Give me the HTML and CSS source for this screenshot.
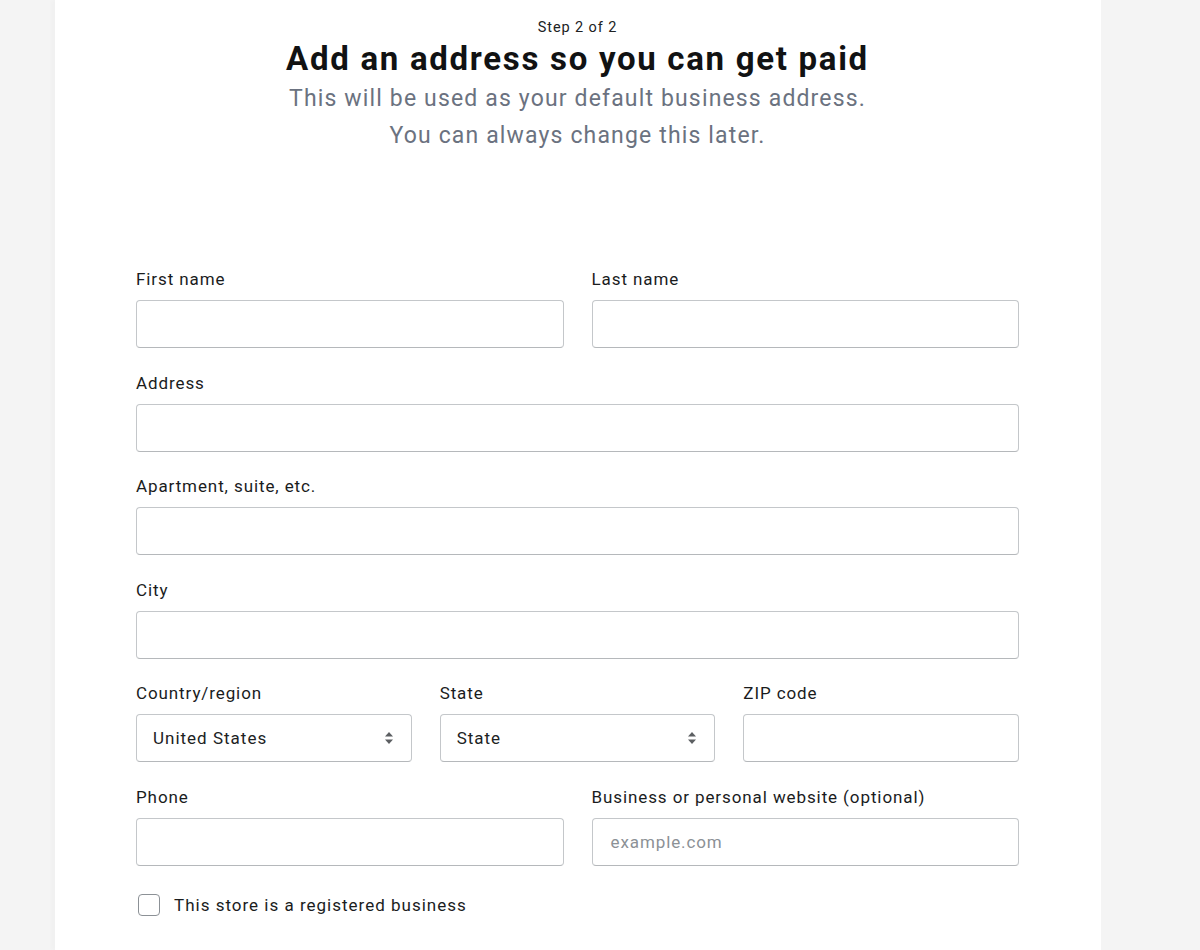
FILE: index.html
```html
<!DOCTYPE html>
<html lang="en">
<head>
<meta charset="utf-8">
<title>Add an address</title>
<link rel="stylesheet" href="styles.css">
</head>
<body>
<div class="page">
  <main class="panel">
    <header class="head">
      <div class="step">Step 2 of 2</div>
      <h1 class="title">Add an address so you can get paid</h1>
      <p class="sub">This will be used as your default business address.<br>You can always change this later.</p>
    </header>
    <form class="form">
      <div class="row two">
        <div class="field"><label class="label">First name</label><div class="input"></div></div>
        <div class="field"><label class="label">Last name</label><div class="input"></div></div>
      </div>
      <div class="row">
        <div class="field"><label class="label">Address</label><div class="input"></div></div>
      </div>
      <div class="row">
        <div class="field"><label class="label">Apartment, suite, etc.</label><div class="input"></div></div>
      </div>
      <div class="row">
        <div class="field"><label class="label">City</label><div class="input"></div></div>
      </div>
      <div class="row three">
        <div class="field"><label class="label">Country/region</label>
          <div class="input select"><span>United States</span>
            <svg class="arr" width="10" height="14" viewBox="0 0 10 14"><path d="M5 1 L9 5.5 H1 Z" fill="#5c5f62"/><path d="M5 13 L9 8.5 H1 Z" fill="#5c5f62"/></svg>
          </div>
        </div>
        <div class="field"><label class="label">State</label>
          <div class="input select"><span>State</span>
            <svg class="arr" width="10" height="14" viewBox="0 0 10 14"><path d="M5 1 L9 5.5 H1 Z" fill="#5c5f62"/><path d="M5 13 L9 8.5 H1 Z" fill="#5c5f62"/></svg>
          </div>
        </div>
        <div class="field"><label class="label">ZIP code</label><div class="input"></div></div>
      </div>
      <div class="row two">
        <div class="field"><label class="label">Phone</label><div class="input"></div></div>
        <div class="field"><label class="label">Business or personal website (optional)</label><div class="input"><span class="ph">example.com</span></div></div>
      </div>
      <div class="check">
        <span class="box"></span>
        <span class="check-text">This store is a registered business</span>
      </div>
    </form>
  </main>
</div>
</body>
</html>
```
FILE: styles.css
```css
html, body {
  margin: 0;
  padding: 0;
  background: #f4f4f4;
  font-family: Roboto, "Liberation Sans", Arial, sans-serif;
  color: #202223;
}
.page {
  padding-left: 55px;
  min-height: 950px;
}
.panel {
  width: 1046px;
  min-height: 950px;
  background: #ffffff;
  box-sizing: border-box;
  padding: 18px 82px 0 81px;
  box-shadow: -4px 0 4px rgba(0,0,0,0.015);
}
.head {
  text-align: center;
}
.step {
  font-size: 14.5px;
  line-height: 20px;
  letter-spacing: 0.9px;
  color: #202223;
}
.title {
  margin: 1px 0 0;
  font-size: 33px;
  line-height: 40px;
  font-weight: 700;
  letter-spacing: 1.7px;
  color: #111213;
}
.sub {
  margin: 1px 0 0;
  font-size: 23px;
  line-height: 37px;
  letter-spacing: 1.15px;
  color: #6b7280;
}
.form {
  margin-top: 115px;
  display: flex;
  flex-direction: column;
}
.row {
  display: grid;
  grid-template-columns: 1fr;
  column-gap: 28px;
  margin-bottom: 24.6px;
}
.row.two { grid-template-columns: 1fr 1fr; }
.row.three { grid-template-columns: 1fr 1fr 1fr; }
.field {
  display: flex;
  flex-direction: column;
}
.label {
  font-size: 17px;
  line-height: 20px;
  letter-spacing: 0.9px;
  margin-bottom: 11px;
  color: #1a1c1d;
}
.input {
  height: 48px;
  box-sizing: border-box;
  border: 1px solid #c4c7ca;
  border-bottom-color: #b5b8bb;
  border-radius: 4px;
  background: #fff;
  display: flex;
  align-items: center;
  padding: 0 16px;
  font-size: 17px;
  letter-spacing: 1px;
}
.select {
  justify-content: space-between;
  color: #202223;
  padding-right: 17px;
}
.arr { display: block; }
.ph {
  color: #8c9196;
  padding-left: 2px;
  letter-spacing: 0.9px;
}
.check {
  display: flex;
  align-items: center;
  margin-top: 3px;
  padding-left: 2px;
}
.box {
  width: 22px;
  height: 22px;
  border: 1.5px solid #8c9196;
  border-radius: 4px;
  box-sizing: border-box;
  margin-right: 14px;
}
.check-text {
  font-size: 17px;
  line-height: 22px;
  letter-spacing: 1px;
  color: #1a1c1d;
}
```
